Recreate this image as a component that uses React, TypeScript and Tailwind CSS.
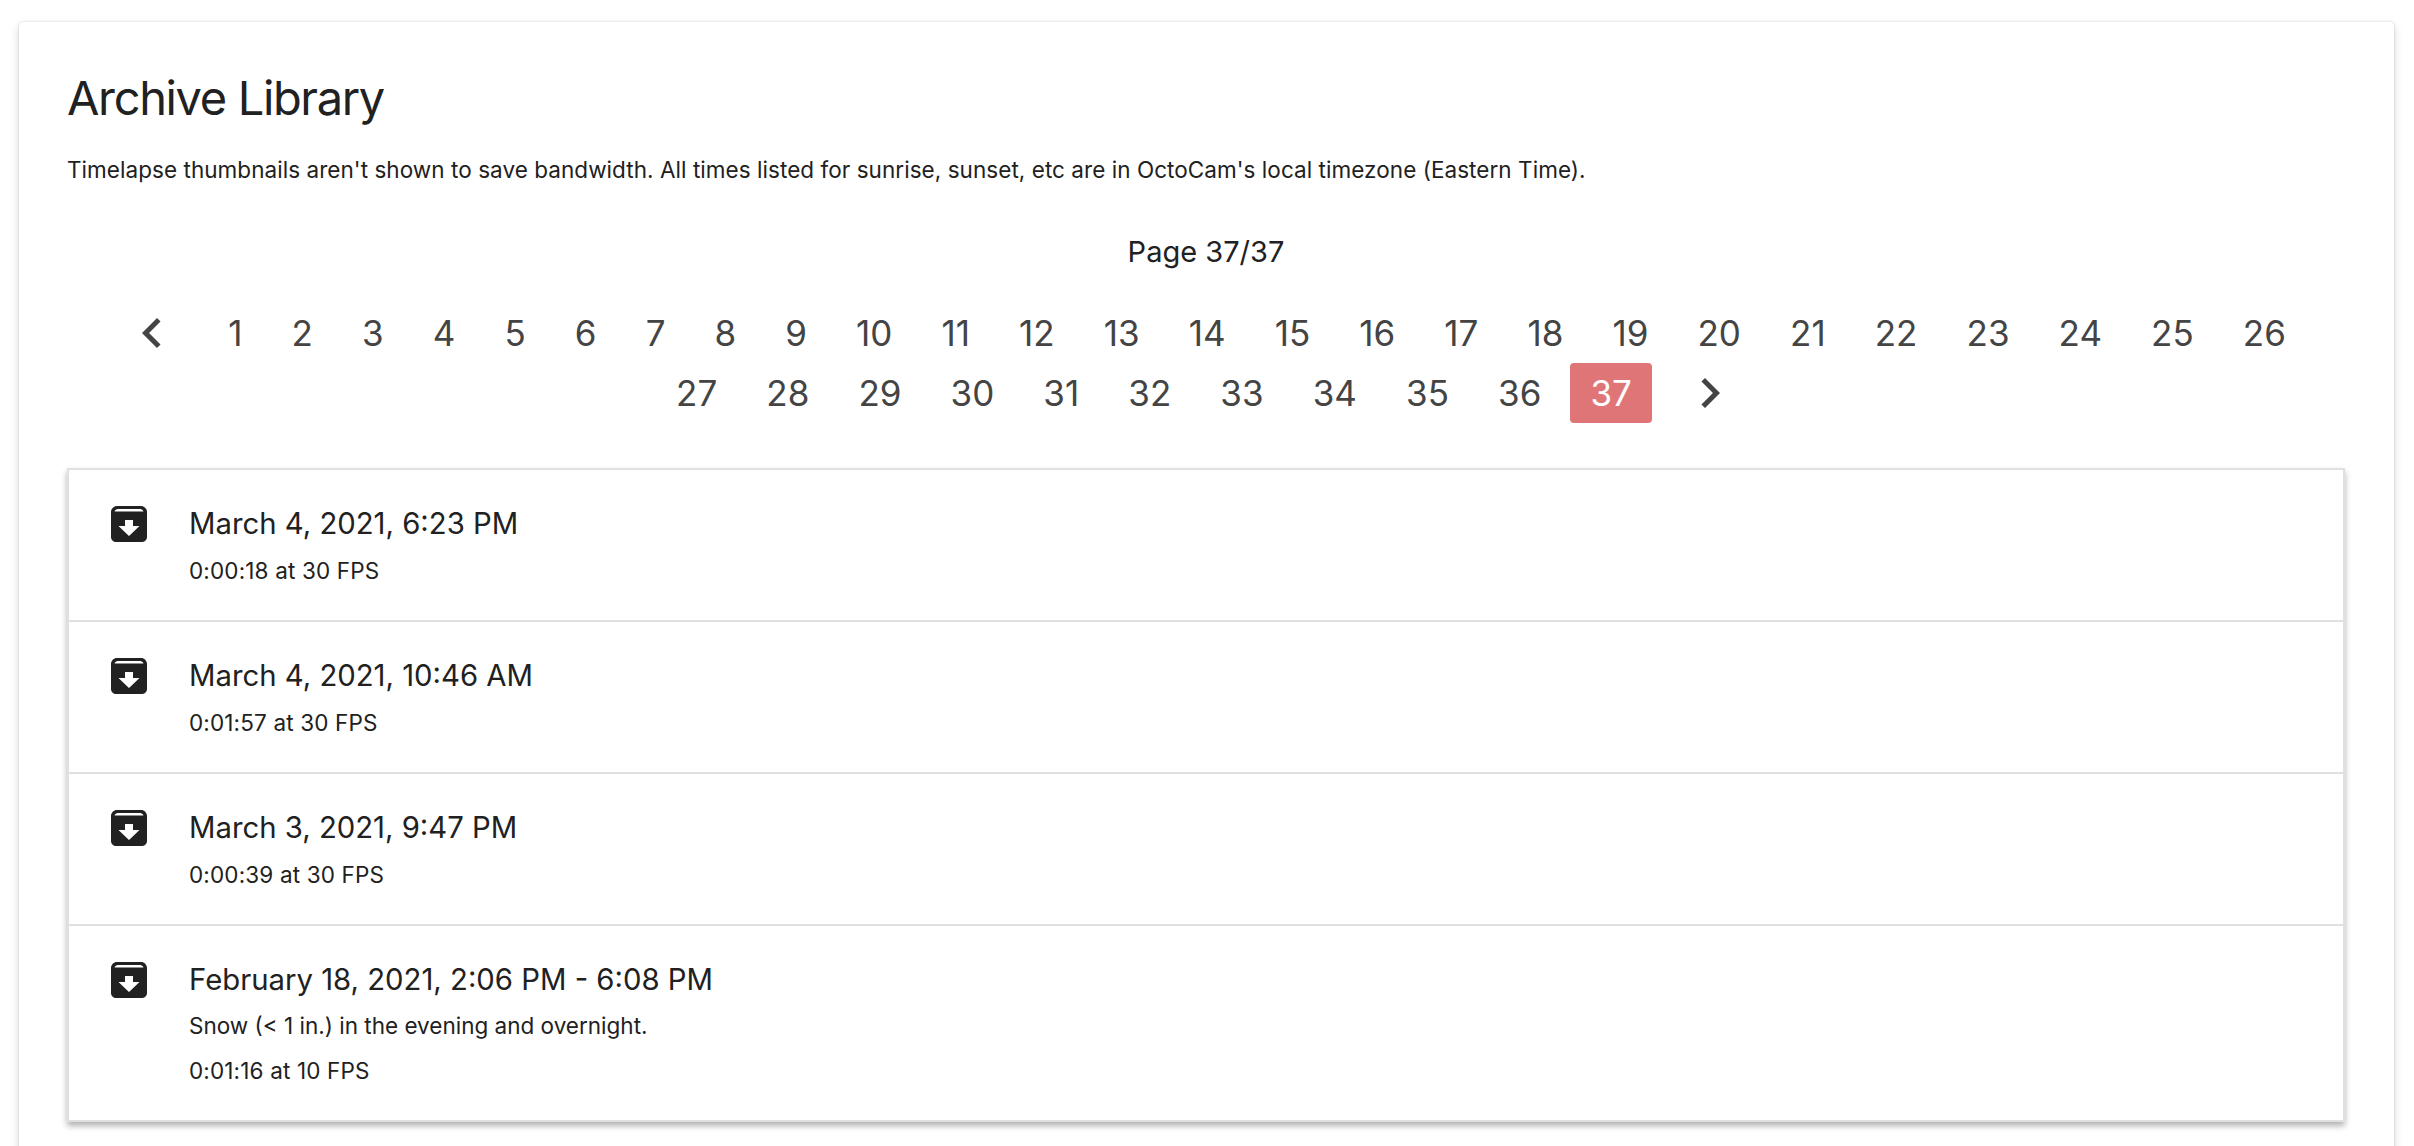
const pages = Array.from({ length: 37 }, (_, i) => i + 1);

const archives = [
  { title: "March 4, 2021, 6:23 PM", info: "0:00:18 at 30 FPS" },
  { title: "March 4, 2021, 10:46 AM", info: "0:01:57 at 30 FPS" },
  { title: "March 3, 2021, 9:47 PM", info: "0:00:39 at 30 FPS" },
  {
    title: "February 18, 2021, 2:06 PM - 6:08 PM",
    note: "Snow (< 1 in.) in the evening and overnight.",
    info: "0:01:16 at 10 FPS",
  },
];

function ArchiveIcon() {
  return (
    <svg viewBox="0 0 36 36" className="w-9 h-9 shrink-0 mt-[6px]" fill="none">
      <path
        fillRule="evenodd"
        fill="#212121"
        d="M6 0h24c3.300 0 6 2.700 6 6v25c0 2.800-2.200 5-5 5H5c-2.800 0-5-2.200-5-5V6c0-3.300 2.700-6 6-6zM3.500 5.500c.5-1.500 1.800-2.500 3.500-2.500h22c1.700 0 3 1 3.500 2.500zM14 14v6H7.500L18 30l10.500-10H22v-6z"
      />
    </svg>
  );
}

function Chevron({ path, className }: { path: string; className: string }) {
  return (
    <span className={`w-[92px] h-[60px] flex items-center justify-center ${className}`}>
      <svg viewBox="0 0 24 24" className="w-[60px] h-[60px]" fill="#444">
        <path d={path} />
      </svg>
    </span>
  );
}

export default function App() {
  return (
    <div className="min-h-screen bg-white pl-[19px] pr-[20px] pt-[22px] font-['Inter',sans-serif] text-[#212121] overflow-hidden">
      <div className="bg-white rounded-[4px] shadow-[0_4px_10px_rgba(0,0,0,0.16),0_0_2px_rgba(0,0,0,0.2)] pl-[48px] pr-[49px] pt-[47px] pb-[60px]">
        <h1 className="text-[47px] leading-[58px] tracking-[-1.350px]">Archive Library</h1>
        <p className="mt-[28px] text-[22.500px] leading-[30px] tracking-[0.05px]">
          Timelapse thumbnails aren't shown to save bandwidth. All times listed for sunrise, sunset, etc are in
          OctoCam's local timezone (Eastern Time).
        </p>

        <p className="mt-[47px] text-center text-[29px] leading-[40px]">Page 37/37</p>

        <div className="mt-[31px] flex flex-wrap justify-center gap-x-[8.100px] text-[35px] leading-[60px] text-[#444]">
          <Chevron path="M15.41 7.41L14 6l-6 6 6 6 1.41-1.41L10.83 12z" className="mr-[2px]" />
          {pages.map((p) =>
            p === 37 ? (
              <span key={p} className="h-[60px] px-[20.500px] rounded-[4px] bg-[#e07578] text-white">
                {p}
              </span>
            ) : (
              <span key={p} className="h-[60px] px-[20.500px]">
                {p}
              </span>
            ),
          )}
          <Chevron path="M10 6L8.590 7.410 13.170 12l-4.580 4.590L10 18l6-6z" className="ml-[4px]" />
        </div>

        <ul className="mt-[45px] border-2 border-[#e0e0e0] shadow-[0_4px_6px_rgba(0,0,0,0.3)] bg-white">
          {archives.map((a) => (
            <li key={a.title} className="flex gap-[42px] px-[42px] pt-[30px] pb-[34px] border-b-2 border-[#e0e0e0] last:border-b-0">
              <ArchiveIcon />
              <div>
                <div className="mt-[2px] text-[29.300px] leading-[44px]">{a.title}</div>
                {a.note && <div className="mt-[9px] text-[22.500px] leading-[30px]">{a.note}</div>}
                <div className={`${a.note ? "mt-[15px]" : "mt-[10px]"} text-[22.500px] leading-[30px] tracking-[0.15px]`}>
                  {a.info}
                </div>
              </div>
            </li>
          ))}
        </ul>
      </div>
    </div>
  );
}
